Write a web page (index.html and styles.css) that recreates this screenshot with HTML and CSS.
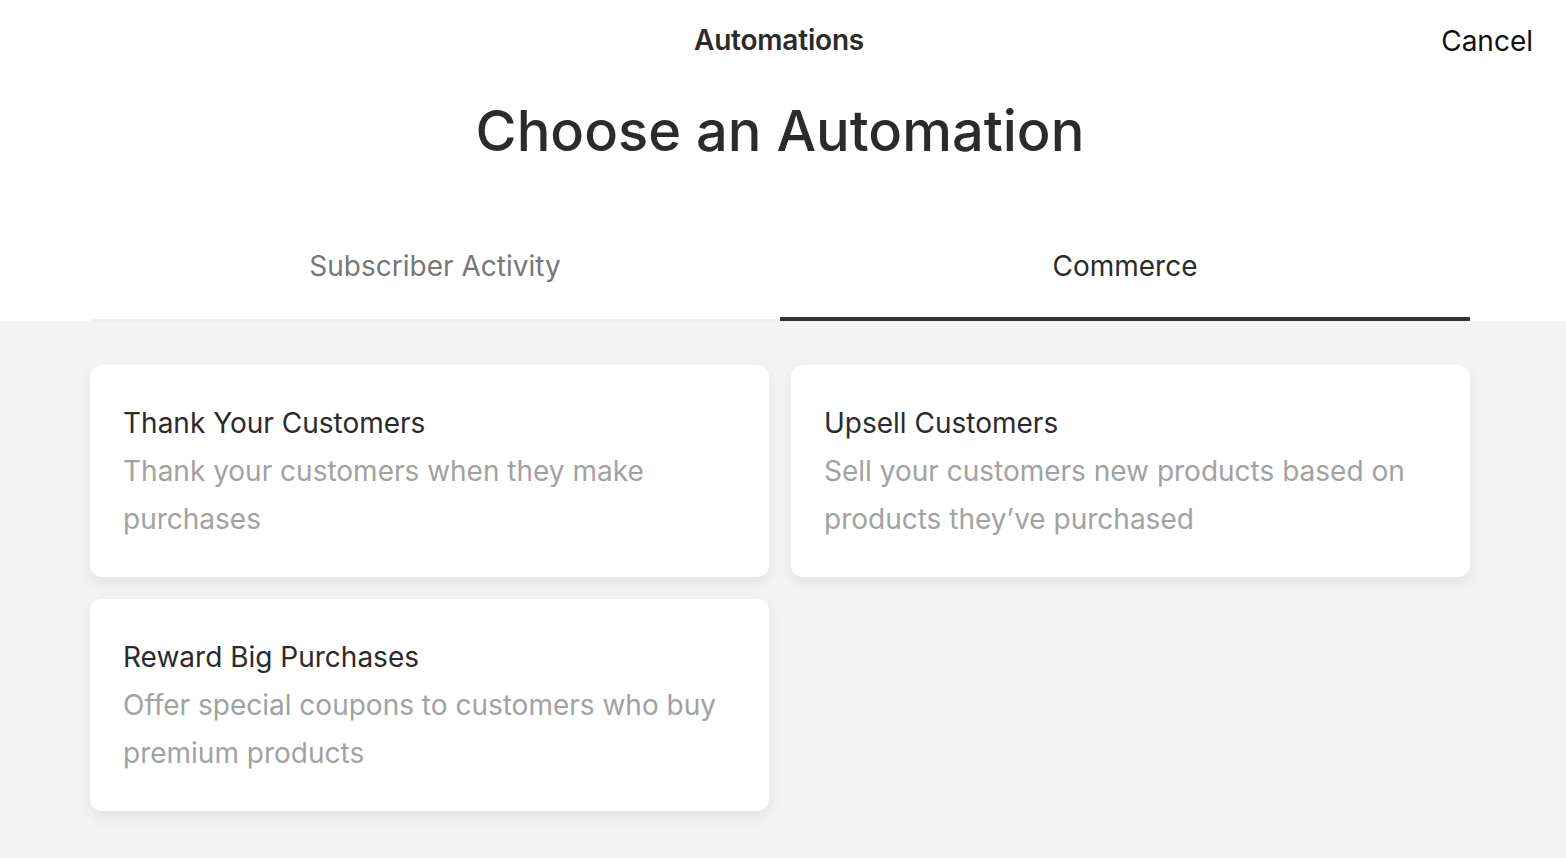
FILE: index.html
```html
<!DOCTYPE html>
<html lang="en">
<head>
<meta charset="utf-8">
<title>Choose an Automation</title>
<link rel="stylesheet" href="styles.css">
</head>
<body>
<div class="top">
  <header class="topbar">
    <span></span>
    <div class="topbar-title">Automations</div>
    <button class="cancel" type="button">Cancel</button>
  </header>
  <h1 class="heading">Choose an Automation</h1>
  <nav class="tabs">
    <div class="tab">Subscriber Activity</div>
    <div class="tab tab-active">Commerce</div>
  </nav>
</div>
<main class="body">
  <div class="grid">
    <div class="card">
      <div class="card-title">Thank Your Customers</div>
      <div class="card-desc">Thank your customers when they make purchases</div>
    </div>
    <div class="card">
      <div class="card-title">Upsell Customers</div>
      <div class="card-desc">Sell your customers new products based on products they’ve purchased</div>
    </div>
    <div class="card">
      <div class="card-title">Reward Big Purchases</div>
      <div class="card-desc">Offer special coupons to customers who buy premium products</div>
    </div>
  </div>
</main>
</body>
</html>
```
FILE: styles.css
```css
html, body {
  margin: 0;
  padding: 0;
  height: 100%;
}
body {
  font-family: Inter, "Liberation Sans", Arial, sans-serif;
  color: #2b2b2b;
  background: #f4f4f4;
  display: flex;
  flex-direction: column;
}
.top {
  background: #fff;
}
.topbar {
  display: grid;
  grid-template-columns: 1fr auto 1fr;
  align-items: center;
  height: 80px;
  padding-left: 90px;
}
.topbar-title {
  font-size: 28px;
  font-weight: 600;
  color: #2b2b2b;
  letter-spacing: -0.2px;
  transform: translateX(-49px);
}
.cancel {
  justify-self: end;
  margin-right: 33px;
  margin-top: 2px;
  background: none;
  border: 0;
  padding: 0;
  font-family: inherit;
  font-size: 28px;
  color: #111;
  cursor: pointer;
}
.heading {
  margin: 15px 96px 0 90px;
  text-align: center;
  font-size: 56px;
  line-height: 72px;
  font-weight: 500;
  color: #2b2b2b;
}
.tabs {
  display: grid;
  grid-template-columns: 1fr 1fr;
  margin: 82px 96px 0 90px;
}
.tab {
  text-align: center;
  font-size: 28px;
  line-height: 34px;
  padding-bottom: 36px;
  color: #777;
  border-bottom: 2px solid #efefef;
}
.tab-active {
  color: #2b2b2b;
  border-bottom: 4px solid #333;
  padding-bottom: 34px;
}
.body {
  flex: 1;
  background: #f4f4f4;
  padding: 44px 96px 44px 90px;
}
.grid {
  display: grid;
  grid-template-columns: 1fr 1fr;
  gap: 22px;
}
.card {
  background: #fff;
  border-radius: 12px;
  padding: 34px 33px;
  box-shadow: 0 6px 16px rgba(0, 0, 0, 0.08);
  height: 144px;
}
.card-title {
  font-size: 28px;
  line-height: 48px;
  color: #2b2b2b;
}
.card-desc {
  font-size: 28px;
  line-height: 48px;
  color: #a2a2a2;
}
```
